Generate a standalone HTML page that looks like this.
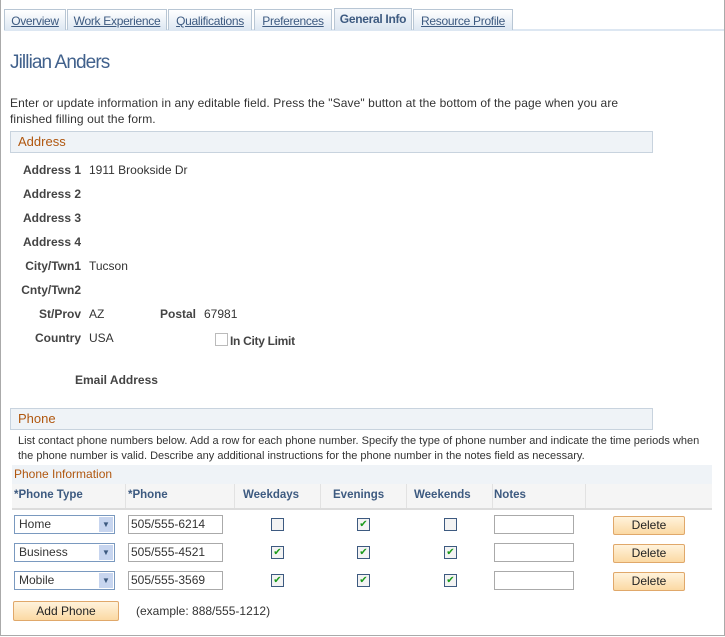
<!DOCTYPE html>
<html><head><style>
body{margin:0;width:725px;height:637px;position:relative;background:#fff;font-family:"Liberation Sans",Arial,sans-serif;font-size:12px;color:#333;overflow:hidden}
.a{position:absolute;white-space:nowrap}
.tab{position:absolute;top:9px;height:21px;border:1px solid #b8c6d4;border-bottom:none;background:linear-gradient(#fff,#dde7f2);text-align:center;line-height:22px;font-size:12px;letter-spacing:-0.3px;color:#3d5a80;text-decoration:underline;box-sizing:border-box}
.lbl{position:absolute;font-weight:bold;text-align:right;width:81px;left:0;color:#444}
.val{position:absolute;left:89px}
.bar{position:absolute;background:#eff3f7;border:1px solid #c8d3de;box-sizing:border-box;color:#b0570f;font-size:13px;padding-left:7px}
.th{position:absolute;top:489px;font-weight:bold;color:#3d5a80;font-size:11.5px}
.sel{position:absolute;left:14px;width:101px;height:19px;border:1px solid #7a99bf;box-sizing:border-box;background:#fff;padding-left:4px;line-height:17px}
.sel i{position:absolute;right:1px;top:1px;width:14px;height:15px;background:#c7d5ef;color:#3d5a80;font-style:normal;font-size:8px;text-align:center;line-height:15px}
.inp{position:absolute;height:19px;border:1px solid #aaa;box-sizing:border-box;background:#fff;padding-left:2px;line-height:17px}
.cb{position:absolute;width:11px;height:11px;border:1px solid #3d5a80;background:#f3f3f3;font-size:10px;color:#1a9a1a;line-height:11px;text-align:center}
.btn{position:absolute;height:19px;border:1px solid #e0a86a;border-radius:2px;background:linear-gradient(#fff3dc,#fbd9a3);box-sizing:border-box;text-align:center;line-height:17px;color:#222}
.vl{position:absolute;top:484px;width:1px;height:24px;background:#e2e2e2}
</style></head><body>
<div class="a" style="left:0;top:0;width:723px;height:635px;border:1px solid #aaa;border-top:none"></div>
<div class="a" style="left:4px;top:29px;width:720px;height:2px;background:#dde7f2"></div>
<div class="tab" style="left:4px;width:62px">Overview</div>
<div class="tab" style="left:67px;width:100px">Work Experience</div>
<div class="tab" style="left:168px;width:84px">Qualifications</div>
<div class="tab" style="left:254px;width:78px">Preferences</div>
<div class="tab" style="left:334px;top:8px;height:22px;width:78px;font-weight:bold;text-decoration:none;background:linear-gradient(#f4f7fb,#dbe5f0);line-height:21px">General Info</div>
<div class="tab" style="left:413px;width:100px">Resource Profile</div>
<div class="a" style="left:10px;top:52px;font-size:19px;letter-spacing:-0.9px;color:#41618c">Jillian Anders</div>
<div class="a" style="left:10px;top:95px;line-height:16px;letter-spacing:0.1px">Enter or update information in any editable field. Press the "Save" button at the bottom of the page when you are<br>finished filling out the form.</div>
<div class="bar" style="left:10px;top:131px;width:643px;height:22px;line-height:20px">Address</div>
<div class="lbl" style="top:163px">Address 1</div><div class="val" style="top:163px">1911 Brookside Dr</div>
<div class="lbl" style="top:187px">Address 2</div>
<div class="lbl" style="top:211px">Address 3</div>
<div class="lbl" style="top:235px">Address 4</div>
<div class="lbl" style="top:259px">City/Twn1</div><div class="val" style="top:259px">Tucson</div>
<div class="lbl" style="top:283px">Cnty/Twn2</div>
<div class="lbl" style="top:307px">St/Prov</div><div class="val" style="top:307px">AZ</div>
<div class="a" style="left:160px;top:307px;font-weight:bold;color:#444">Postal</div><div class="a" style="left:204px;top:307px">67981</div>
<div class="lbl" style="top:331px">Country</div><div class="val" style="top:331px">USA</div>
<div class="a" style="left:215px;top:333px;width:11px;height:11px;border:1px solid #bbb"></div>
<div class="a" style="left:230px;top:334px;font-weight:bold;color:#444;letter-spacing:-0.3px">In City Limit</div>
<div class="a" style="left:75px;top:373px;font-weight:bold;color:#444">Email Address</div>
<div class="bar" style="left:10px;top:408px;width:643px;height:22px;line-height:20px">Phone</div>
<div class="a" style="left:18px;top:434px;font-size:11px;line-height:15px">List contact phone numbers below. Add a row for each phone number. Specify the type of phone number and indicate the time periods when<br>the phone number is valid. Describe any additional instructions for the phone number in the notes field as necessary.</div>
<div class="a" style="left:12px;top:465px;width:700px;height:19px;background:#eff3f7;color:#b0570f;padding-left:2px;box-sizing:border-box;line-height:19px">Phone Information</div>
<div class="a" style="left:12px;top:484px;width:700px;height:24px;background:#f5f5f5;border-bottom:2px solid #dcdcdc"></div>
<div class="vl" style="left:125px"></div>
<div class="vl" style="left:234px"></div>
<div class="vl" style="left:320px"></div>
<div class="vl" style="left:406px"></div>
<div class="vl" style="left:492px"></div>
<div class="vl" style="left:585px"></div>
<div class="th" style="left:14px">*Phone Type</div>
<div class="th" style="left:128px">*Phone</div>
<div class="th" style="left:243px">Weekdays</div>
<div class="th" style="left:333px">Evenings</div>
<div class="th" style="left:414px">Weekends</div>
<div class="th" style="left:494px">Notes</div>

<div class="sel" style="top:515px">Home<i>▼</i></div>
<div class="inp" style="left:128px;top:515px;width:95px">505/555-6214</div>
<div class="cb" style="left:271px;top:518px"></div><div class="cb" style="left:357px;top:518px">✔</div><div class="cb" style="left:444px;top:518px"></div>
<div class="inp" style="left:494px;top:515px;width:80px"></div>
<div class="btn" style="left:613px;top:516px;width:72px">Delete</div>

<div class="sel" style="top:543px">Business<i>▼</i></div>
<div class="inp" style="left:128px;top:543px;width:95px">505/555-4521</div>
<div class="cb" style="left:271px;top:546px">✔</div><div class="cb" style="left:357px;top:546px">✔</div><div class="cb" style="left:444px;top:546px">✔</div>
<div class="inp" style="left:494px;top:543px;width:80px"></div>
<div class="btn" style="left:613px;top:544px;width:72px">Delete</div>

<div class="sel" style="top:571px">Mobile<i>▼</i></div>
<div class="inp" style="left:128px;top:571px;width:95px">505/555-3569</div>
<div class="cb" style="left:271px;top:574px">✔</div><div class="cb" style="left:357px;top:574px">✔</div><div class="cb" style="left:444px;top:574px">✔</div>
<div class="inp" style="left:494px;top:571px;width:80px"></div>
<div class="btn" style="left:613px;top:572px;width:72px">Delete</div>

<div class="btn" style="left:13px;top:601px;width:106px;height:20px;line-height:18px">Add Phone</div>
<div class="a" style="left:136px;top:604px">(example: 888/555-1212)</div>
</body></html>
